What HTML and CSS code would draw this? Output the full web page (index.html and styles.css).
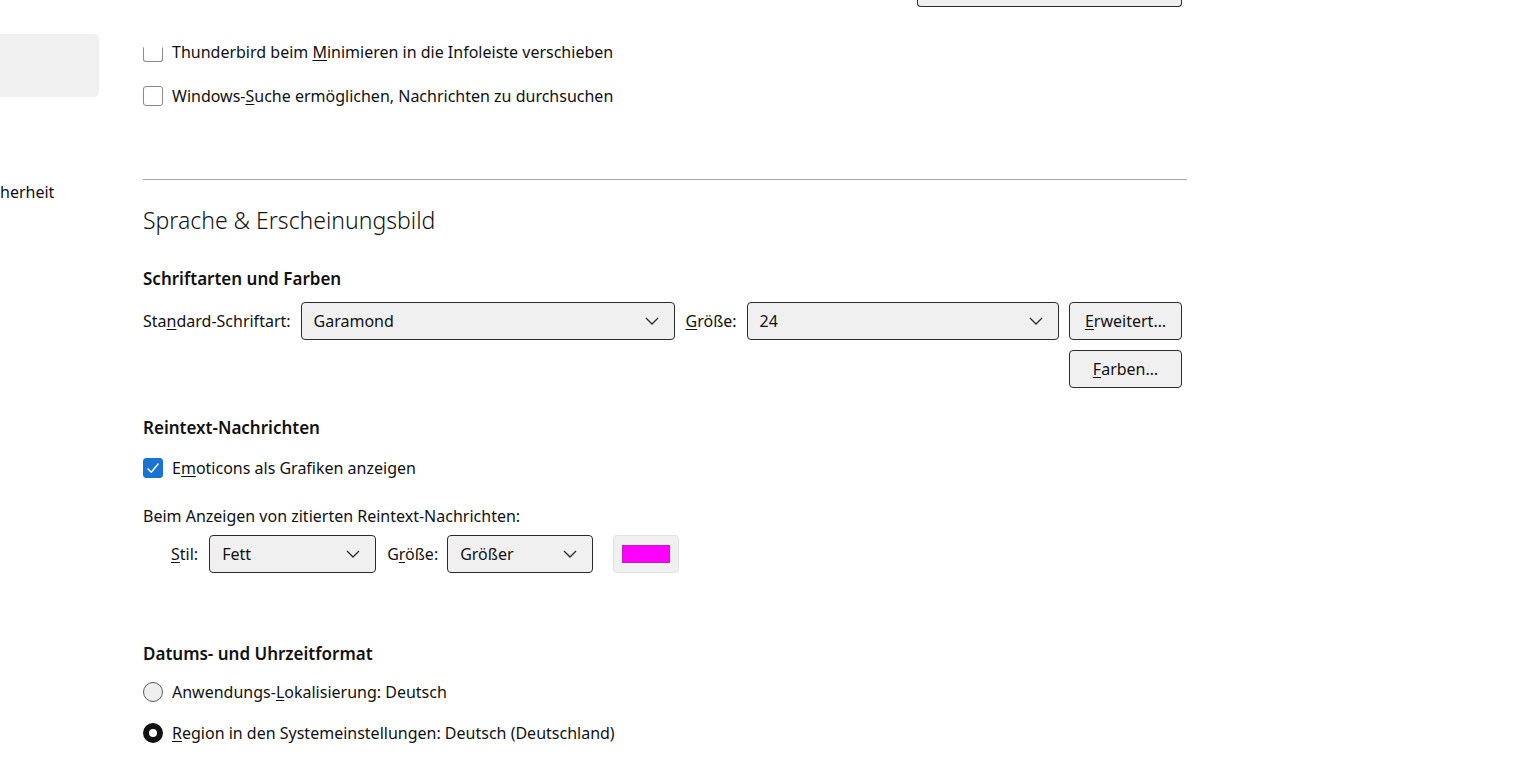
FILE: index.html
```html
<!DOCTYPE html>
<html lang="de">
<head>
    <meta charset="UTF-8">
    <meta name="viewport" content="width=device-width, initial-scale=1.0">
    <title>Einstellungen</title>
    <link rel="stylesheet" href="styles.css">
</head>
<body>
    <div class="page">
        <nav class="sidebar">
            <div class="nav-item nav-item-active"></div>
            <div class="nav-item nav-item-text">herheit</div>
        </nav>

        <main class="content">
            <div class="stub-row"><div class="select-stub"></div></div>

            <label class="check-row check-row-first">
                <span class="checkbox checkbox-cut"></span>
                <span>Thunderbird beim <u>M</u>inimieren in die Infoleiste verschieben</span>
            </label>
            <label class="check-row check-row-second">
                <span class="checkbox"></span>
                <span>Windows-<u>S</u>uche ermöglichen, Nachrichten zu durchsuchen</span>
            </label>

            <hr class="divider">

            <h1 class="section-title">Sprache &amp; Erscheinungsbild</h1>

            <h2 class="group-title group-fonts">Schriftarten und Farben</h2>
            <div class="font-rows">
                <div class="font-row">
                    <span class="field-label">Sta<u>n</u>dard-Schriftart:</span>
                    <div class="dropdown dropdown-font">
                        <span>Garamond</span>
                        <svg class="chevron" width="14" height="8" viewBox="0 0 14 8"><path d="M1 1l6 6 6-6" fill="none" stroke="#2b2b2b" stroke-width="1.3"/></svg>
                    </div>
                    <span class="field-label gap-left"><u>G</u>röße:</span>
                    <div class="dropdown dropdown-size">
                        <span>24</span>
                        <svg class="chevron" width="14" height="8" viewBox="0 0 14 8"><path d="M1 1l6 6 6-6" fill="none" stroke="#2b2b2b" stroke-width="1.3"/></svg>
                    </div>
                    <button class="btn btn-push"><u>E</u>rweitert…</button>
                </div>
                <div class="font-row font-row-end">
                    <button class="btn"><u>F</u>arben…</button>
                </div>
            </div>

            <h2 class="group-title group-plain">Reintext-Nachrichten</h2>
            <label class="check-row check-row-emoticons">
                <span class="checkbox checkbox-on">
                    <svg width="14" height="12" viewBox="0 0 14 12"><path d="M1.5 6.5l3.8 3.8L12.5 1.5" fill="none" stroke="#fff" stroke-width="1.4"/></svg>
                </span>
                <span>E<u>m</u>oticons als Grafiken anzeigen</span>
            </label>

            <p class="plain-line">Beim Anzeigen von zitierten Reintext-Nachrichten:</p>
            <div class="quote-row">
                <span class="field-label"><u>S</u>til:</span>
                <div class="dropdown dropdown-style">
                    <span>Fett</span>
                    <svg class="chevron" width="14" height="8" viewBox="0 0 14 8"><path d="M1 1l6 6 6-6" fill="none" stroke="#2b2b2b" stroke-width="1.3"/></svg>
                </div>
                <span class="field-label quote-gap">G<u>r</u>öße:</span>
                <div class="dropdown dropdown-quote-size">
                    <span>Größer</span>
                    <svg class="chevron" width="14" height="8" viewBox="0 0 14 8"><path d="M1 1l6 6 6-6" fill="none" stroke="#2b2b2b" stroke-width="1.3"/></svg>
                </div>
                <button class="color-btn"><span class="swatch"></span></button>
            </div>

            <h2 class="group-title group-date">Datums- und Uhrzeitformat</h2>
            <label class="radio-row radio-row-first">
                <span class="radio"></span>
                <span>Anwendungs-<u>L</u>okalisierung: Deutsch</span>
            </label>
            <label class="radio-row radio-row-second">
                <span class="radio radio-on"></span>
                <span><u>R</u>egion in den Systemeinstellungen: Deutsch (Deutschland)</span>
            </label>
        </main>
    </div>
</body>
</html>
```

FILE: styles.css
```css
body {
    margin: 0;
    background: #fff;
    color: #111;
    font-family: 'Noto Sans', 'Open Sans', sans-serif;
    font-size: 16px;
    overflow: hidden;
}

.page {
    display: flex;
}

/* left category list, scrolled off to the left */
.sidebar {
    width: 99px;
    flex-shrink: 0;
    padding-top: 34px;
}

.nav-item-active {
    height: 63px;
    background: #f0f0f0;
    border-radius: 0 5px 5px 0;
}

.nav-item-text {
    margin-top: 84px;
    line-height: 22px;
    white-space: nowrap;
}

.content {
    margin-left: 44px;
    width: 1044px;
}

u {
    text-underline-offset: 2px;
}

/* bottom edge of the dropdown above */
.stub-row {
    display: flex;
    justify-content: flex-end;
    padding-right: 5px;
    height: 7px;
}

.select-stub {
    width: 263px;
    height: 6px;
    background: #f0f0f0;
    border: 1px solid #2b2b2b;
    border-top: none;
    border-radius: 0 0 4px 4px;
}

.check-row,
.radio-row {
    display: flex;
    align-items: center;
    line-height: 22px;
    height: 22px;
}

.check-row-first { margin-top: 34px; }
.check-row-second { margin-top: 22px; }

.checkbox {
    box-sizing: border-box;
    width: 20px;
    height: 20px;
    margin-right: 9px;
    border: 1px solid #8a8a8a;
    border-radius: 3px;
    display: flex;
    align-items: center;
    justify-content: center;
}

.checkbox-cut {
    height: 15px;
    margin-top: 5px;
    border-top-color: transparent;
    border-radius: 0 0 3px 3px;
}

.checkbox-on {
    background: #1a73d1;
    border-color: #1a73d1;
}

.divider {
    margin: 72px 0 0;
    border: none;
    border-top: 1px solid #a9a9a9;
}

.section-title {
    margin: 24px 0 0;
    font-size: 23px;
    font-weight: 300;
    line-height: 32px;
    height: 32px;
}

.group-title {
    margin: 0;
    font-size: 17px;
    font-weight: 600;
    line-height: 22px;
}

.group-fonts { margin-top: 32px; }
.group-plain { margin-top: 29px; }
.group-date { margin-top: 70px; }

.font-rows {
    margin-top: 12px;
    padding-right: 5px;
    display: flex;
    flex-direction: column;
    gap: 10px;
}

.font-row {
    display: flex;
    align-items: center;
}

.font-row-end {
    justify-content: flex-end;
}

.field-label {
    white-space: nowrap;
}

.gap-left {
    margin-left: 11px;
}

.dropdown {
    box-sizing: border-box;
    height: 38px;
    margin-left: 10px;
    padding: 0 15px 0 12px;
    display: flex;
    align-items: center;
    justify-content: space-between;
    background: #f0f0f0;
    border: 1px solid #2b2b2b;
    border-radius: 4px;
}

.dropdown-font { width: 374px; }
.dropdown-size { width: 312px; }
.dropdown-style { width: 167px; }
.dropdown-quote-size { width: 146px; }

.btn {
    box-sizing: border-box;
    width: 113px;
    height: 38px;
    font: inherit;
    color: inherit;
    background: #f0f0f0;
    border: 1px solid #2b2b2b;
    border-radius: 4px;
    padding: 0;
}

.btn-push {
    margin-left: auto;
}

.check-row-emoticons { margin-top: 18px; }

.plain-line {
    margin: 26px 0 0;
    line-height: 22px;
}

.quote-row {
    margin-top: 8px;
    padding-left: 28px;
    display: flex;
    align-items: center;
}

.quote-row .dropdown {
    margin-left: 11px;
}

.quote-gap {
    margin-left: 11px;
}

.quote-row .dropdown-quote-size {
    margin-left: 9px;
}

.color-btn {
    box-sizing: border-box;
    width: 66px;
    height: 38px;
    margin-left: 20px;
    padding: 0;
    background: #f0f0f0;
    border: 1px solid #e2e2e2;
    border-radius: 4px;
    display: flex;
    align-items: center;
    justify-content: center;
}

.swatch {
    box-sizing: border-box;
    width: 48px;
    height: 18px;
    background: #ff00ff;
    border: 1px solid #c21fc2;
}

.radio-row-first { margin-top: 16px; }
.radio-row-second { margin-top: 19px; }

.radio {
    box-sizing: border-box;
    width: 20px;
    height: 20px;
    margin-right: 9px;
    border: 1px solid #5b5b5b;
    border-radius: 50%;
    background: #efefef;
}

.radio-on {
    border: 6px solid #111;
    background: #fff;
}
```
